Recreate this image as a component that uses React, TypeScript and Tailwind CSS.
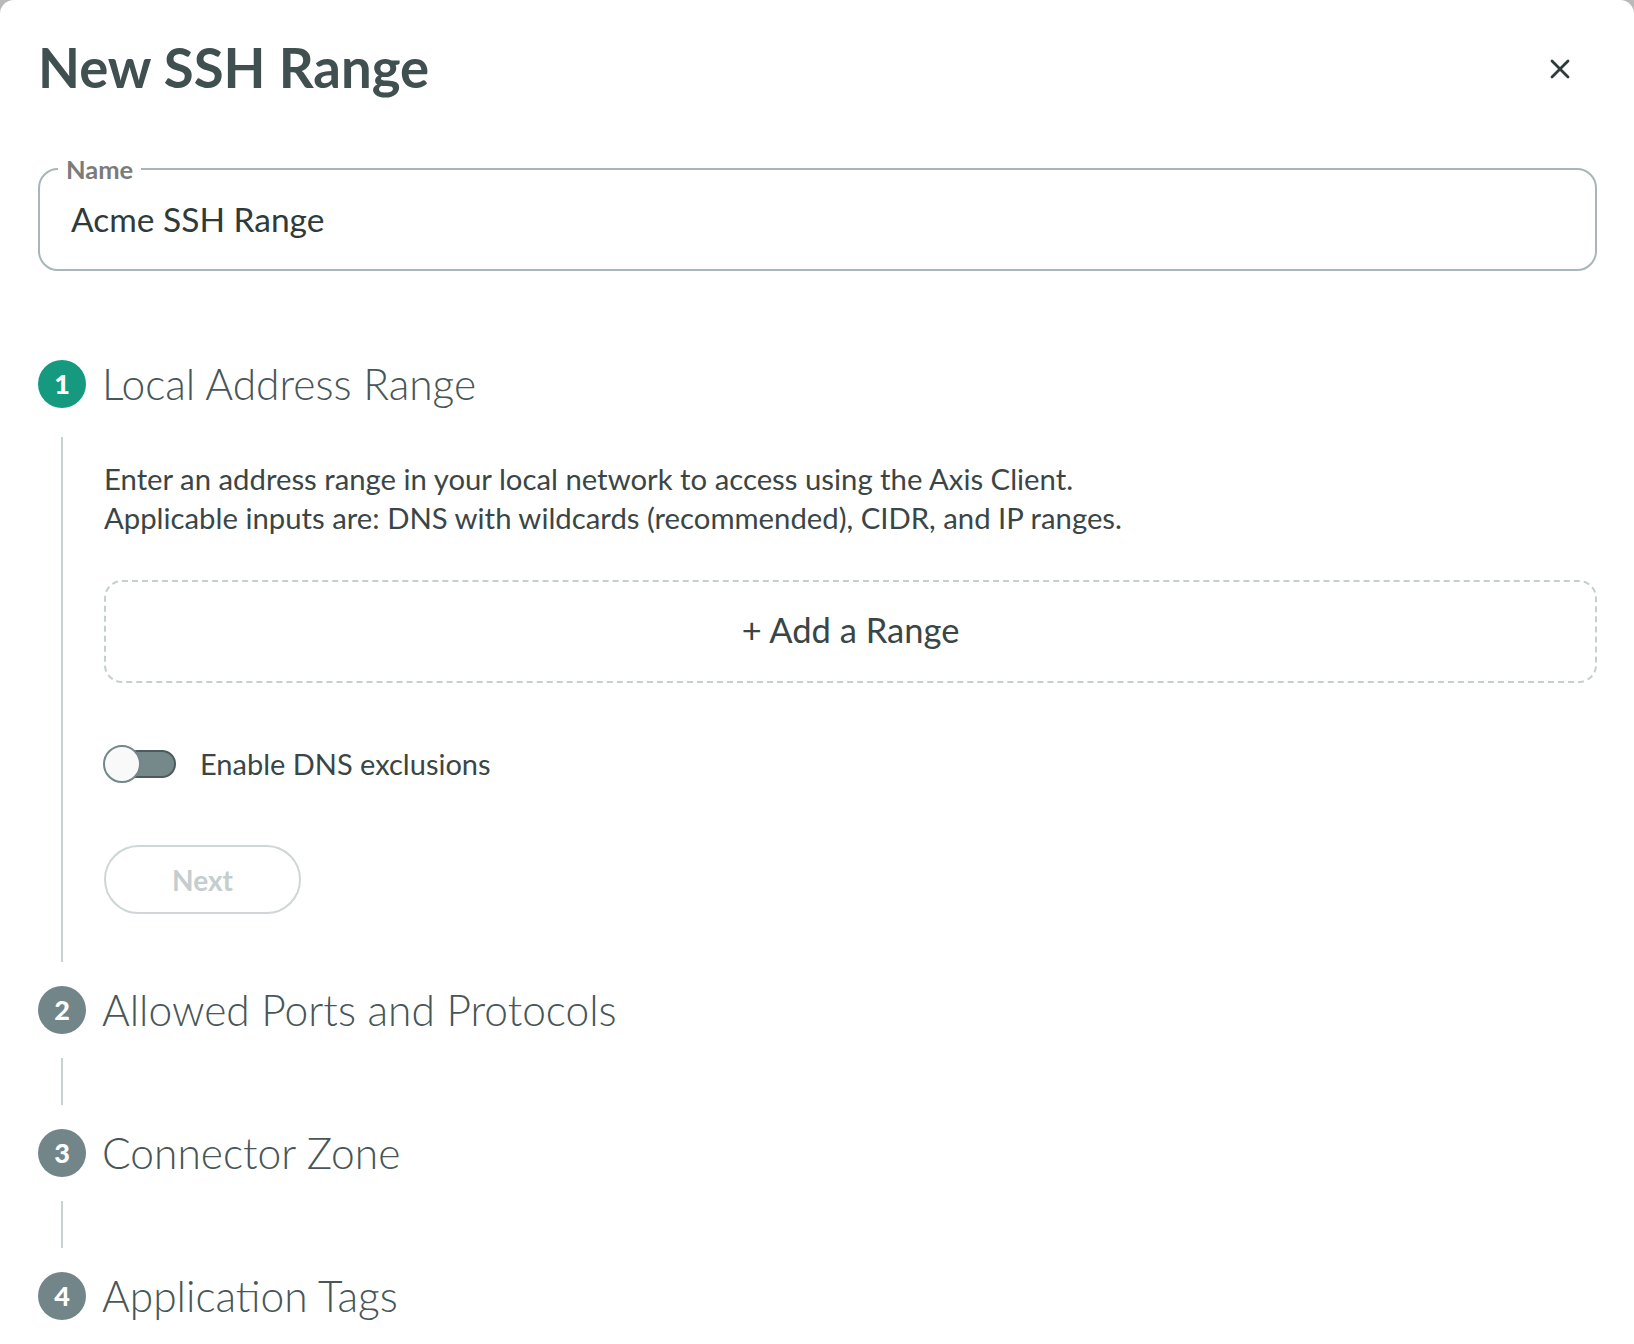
import React from "react";

const font = { fontFamily: "Lato, 'Open Sans', sans-serif" };

function StepHeader({ n, title, active }: { n: number; title: string; active?: boolean }) {
  return (
    <div className="flex items-center gap-[16px] h-[48px]">
      <div
        className={`w-[48px] h-[48px] rounded-full flex items-center justify-center text-white text-[27px] font-black ${
          active ? "bg-[#159a7f]" : "bg-[#72868a]"
        }`}
      >
        {n}
      </div>
      <div className="text-[42.5px] leading-[48px] font-light text-[#475657]">{title}</div>
    </div>
  );
}

function Connector() {
  return (
    <div className="flex w-[48px] justify-center my-[24px]">
      <div className="w-[2px] h-[47px] bg-[#c9d2d3]" />
    </div>
  );
}

export default function App() {
  return (
    <div className="h-[1344px] overflow-hidden bg-[#b9b9b9]" style={font}>
      <div className="h-full bg-white rounded-t-[14px] pl-[38px] pr-[37px]">
        {/* header */}
        <div className="flex items-center justify-between pt-[35px]">
          <h1 className="text-[54.5px] leading-[64px] font-bold text-[#404f50]">New SSH Range</h1>
          <button className="mr-[27px] mt-[4px] text-[#2f3a3a]">
            <svg width="20" height="20" viewBox="0 0 20 20" fill="none">
              <path d="M2 2L18 18M18 2L2 18" stroke="currentColor" strokeWidth="2.8" strokeLinecap="round" />
            </svg>
          </button>
        </div>

        {/* name field */}
        <fieldset className="mt-[57px] border-2 border-[#a9b6b7] rounded-[20px] px-[18px] pb-[30px]">
          <legend className="px-[8px] text-[25.5px] leading-[26px] font-bold text-[#7b7b7b]">Name</legend>
          <div className="pt-[17px] pl-[13px] text-[33.5px] leading-[40px] text-[#2f3a3a]">Acme SSH Range</div>
        </fieldset>

        {/* steps */}
        <div className="mt-[89px]">
          <StepHeader n={1} title="Local Address Range" active />
          <div className="flex mt-[29px] mb-[24px]">
            <div className="flex w-[48px] justify-center">
              <div className="w-[2px] bg-[#c9d2d3]" />
            </div>
            <div className="flex-1 pl-[18px] pt-[22px] pb-[48px]">
              <p className="text-[29.3px] leading-[39px] text-[#3a4646]">
                Enter an address range in your local network to access using the Axis Client.
                <br />
                Applicable inputs are: DNS with wildcards (recommended), CIDR, and IP ranges.
              </p>
              <div className="mt-[43px] h-[103px] border-2 border-dashed border-[#c5cfd0] rounded-[18px] flex items-center justify-center pb-[4px] text-[34.5px] text-[#3a4646]">
                + Add a Range
              </div>
              <div className="mt-[61px] flex items-center h-[40px]">
                <div className="relative -ml-[1px] w-[73px] h-[39px] flex items-center">
                  <div className="ml-[12px] w-[61px] h-[28px] rounded-full bg-[#75898b] border-2 border-[#4d5b5c]" />
                  <div className="absolute left-0 top-0 w-[38px] h-[38px] rounded-full bg-[#f9f9f9] border-2 border-[#72878a]" />
                </div>
                <span className="ml-[24px] text-[29px] text-[#3a4646]">Enable DNS exclusions</span>
              </div>
              <button className="mt-[61px] w-[197px] h-[69px] rounded-full border-2 border-[#cfd6d7] text-[28px] font-bold text-[#c5cdce]">
                Next
              </button>
            </div>
          </div>
          <StepHeader n={2} title="Allowed Ports and Protocols" />
          <Connector />
          <StepHeader n={3} title="Connector Zone" />
          <Connector />
          <StepHeader n={4} title="Application Tags" />
        </div>
      </div>
    </div>
  );
}
